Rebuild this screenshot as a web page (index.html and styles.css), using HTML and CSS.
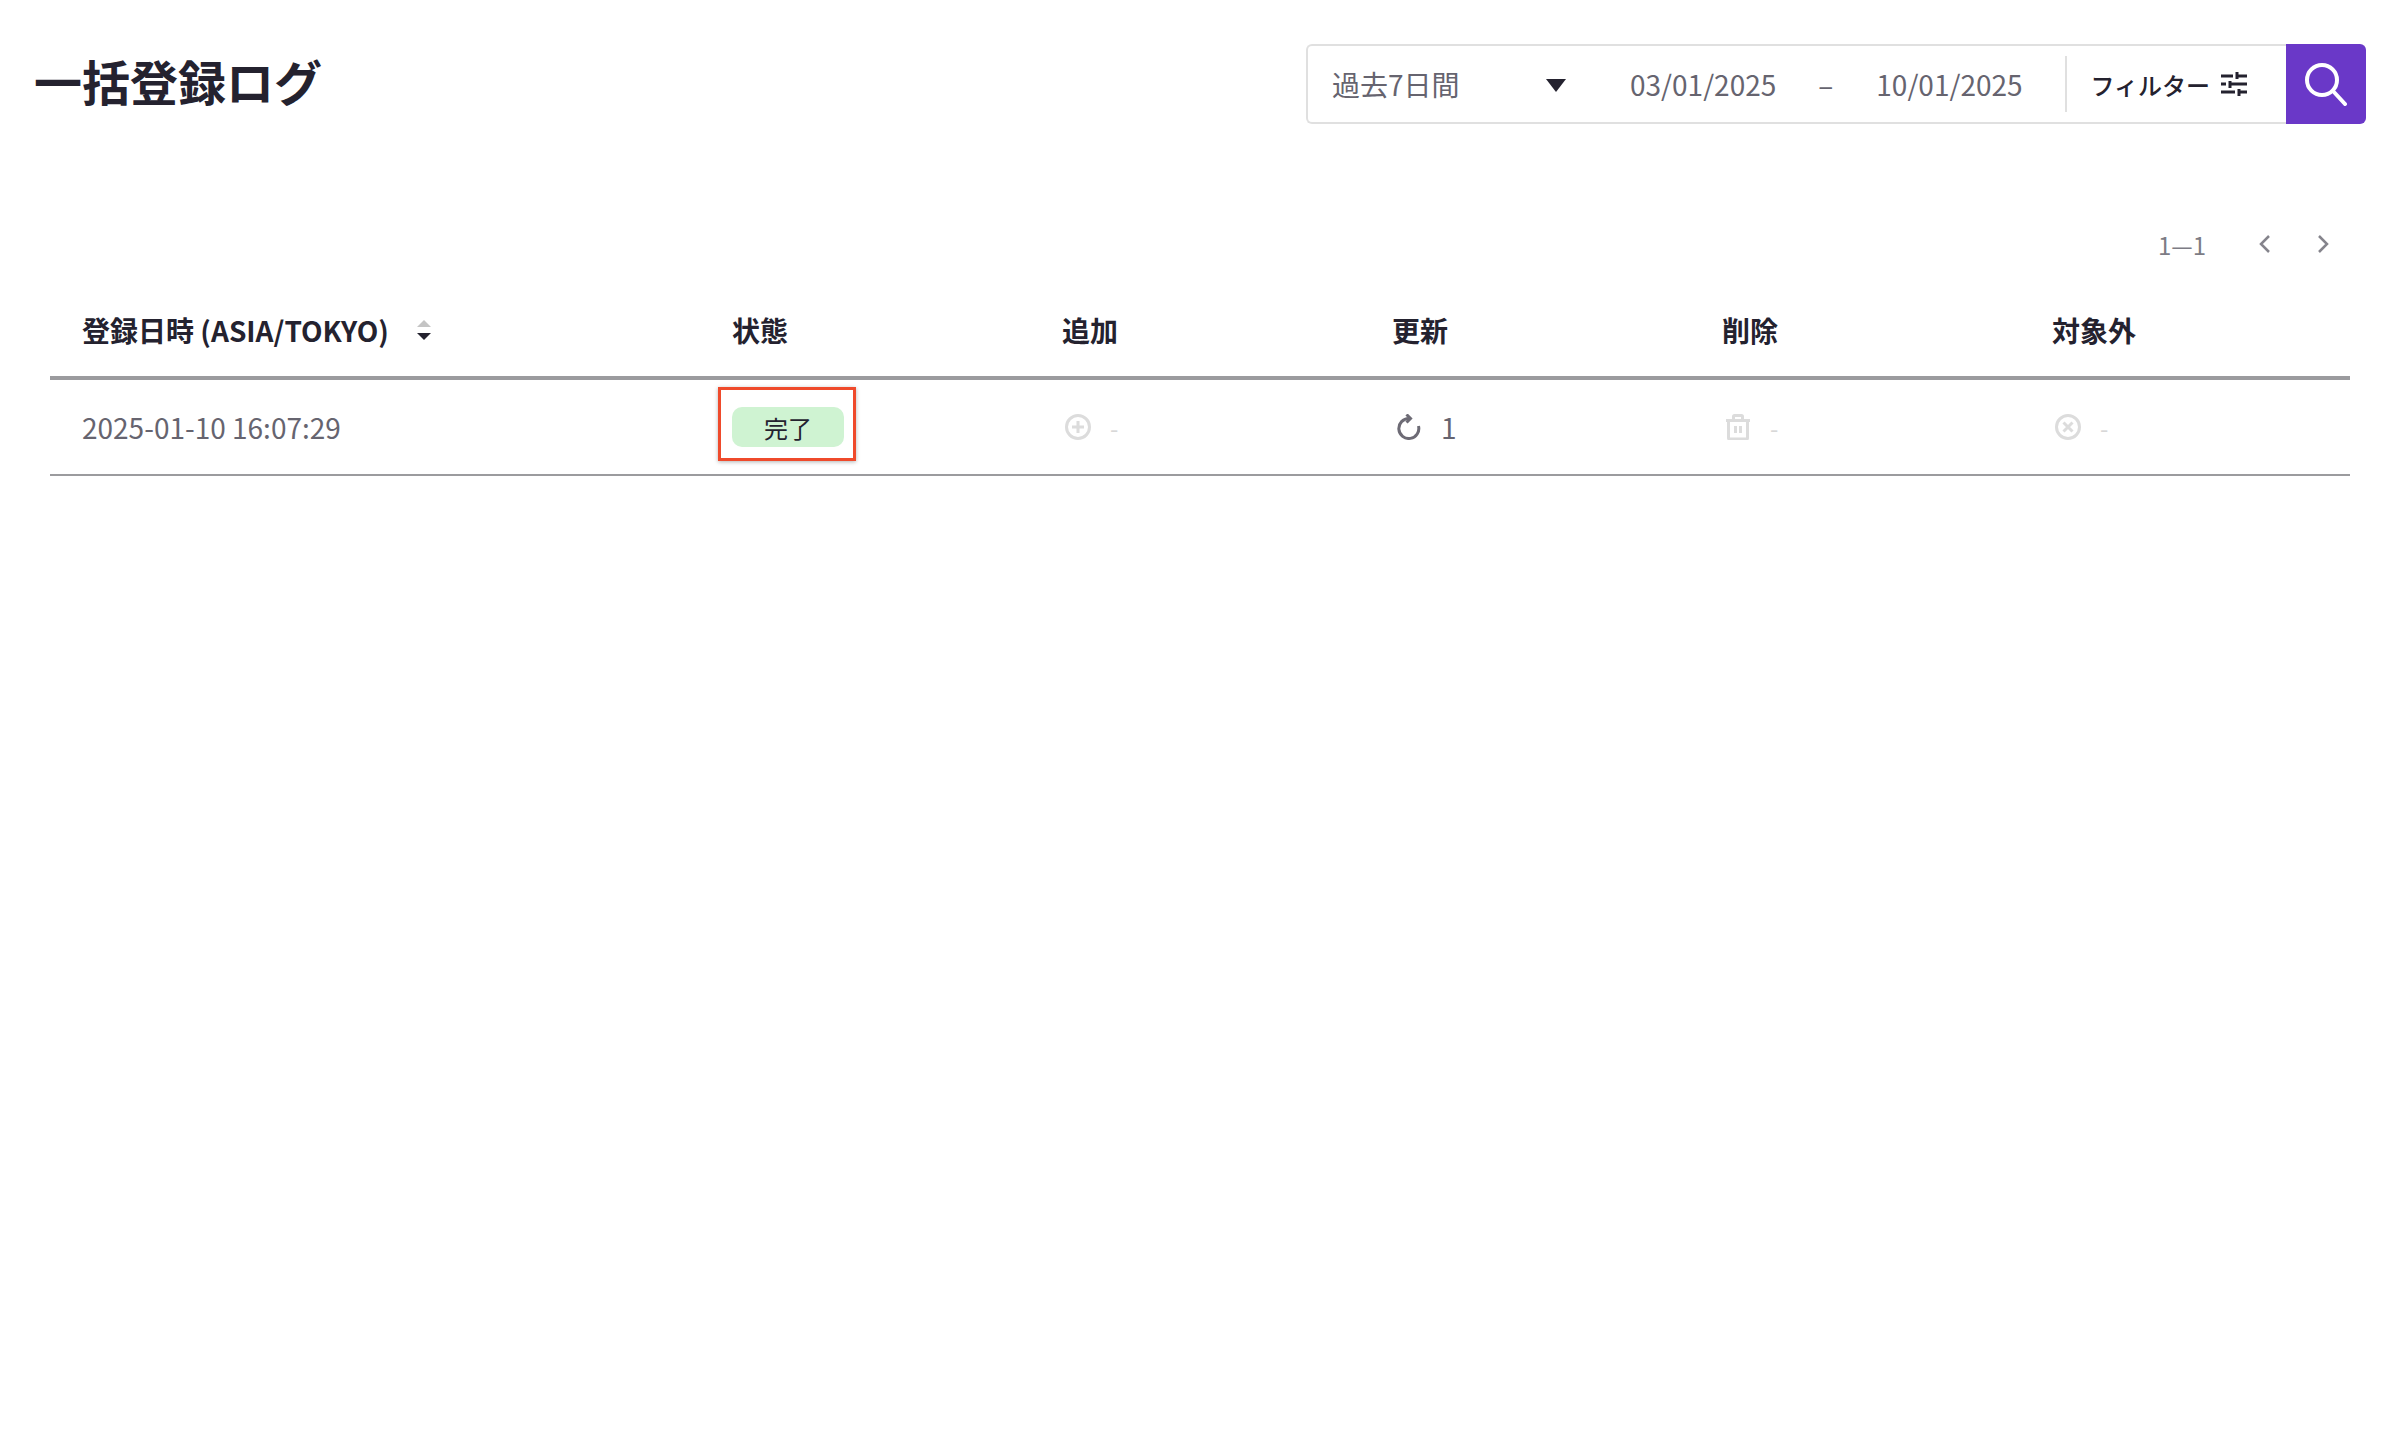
FILE: index.html
```html
<!DOCTYPE html>
<html lang="ja">
<head>
<meta charset="utf-8">
<title>一括登録ログ</title>
<link rel="stylesheet" href="styles.css">
</head>
<body>
<header class="top">
  <h1 class="title">一括登録ログ</h1>
  <div class="filters">
    <div class="range">
      <span class="range-label">過去7日間</span>
      <svg class="caret" viewBox="0 0 20 13"><path d="M0 0h20L10 13z"/></svg>
      <span class="date date-from">03/01/2025</span>
      <span class="date-sep">–</span>
      <span class="date date-to">10/01/2025</span>
      <span class="divider"></span>
      <span class="filter-btn">フィルター</span>
      <svg class="tune" viewBox="0 0 26 24"><path d="M0 4h12M16 4h10M16 0v7M0 12h5M9 12h17M9 9v7M0 20h14M18 20h8M18 17v7"/></svg>
    </div>
    <button class="search" type="button" aria-label="検索">
      <svg viewBox="0 0 44 44"><circle cx="18" cy="18" r="15"/><path d="M29 29l12 13"/></svg>
    </button>
  </div>
</header>
<nav class="pager">
  <span class="pager-count">1—1</span>
  <svg class="chev chev-prev" viewBox="0 0 12 20"><path d="M10 2L2 10l8 8"/></svg>
  <svg class="chev chev-next" viewBox="0 0 12 20"><path d="M2 2l8 8-8 8"/></svg>
</nav>
<section class="table">
  <div class="row head">
    <div class="cell first">登録日時 (ASIA/TOKYO)
      <svg class="sort" viewBox="0 0 14 20"><path class="sort-up" d="M7 0l7 7H0z"/><path class="sort-down" d="M0 13h14l-7 7z"/></svg>
    </div>
    <div class="cell">状態</div>
    <div class="cell">追加</div>
    <div class="cell">更新</div>
    <div class="cell">削除</div>
    <div class="cell">対象外</div>
  </div>
  <div class="row body">
    <div class="cell first">2025-01-10 16:07:29</div>
    <div class="cell status">
      <span class="badge">完了</span>
      <span class="highlight"></span>
    </div>
    <div class="cell stat muted">
      <svg class="ico" viewBox="0 0 26 26"><circle cx="13" cy="13" r="11.5"/><path d="M13 7v12M7 13h12"/></svg>
      <span>-</span>
    </div>
    <div class="cell stat">
      <svg class="ico ico-refresh" viewBox="0 0 26 26"><path d="M13 4.500A10 10 0 1 0 22.500 12"/><path d="M10.500 0.500L14.500 4.500L10.500 8.500"/></svg>
      <span>1</span>
    </div>
    <div class="cell stat muted">
      <svg class="ico" viewBox="0 0 26 26"><path d="M1 6.500h24M3.500 6.500V24a1 1 0 0 0 1 1h17a1 1 0 0 0 1-1V6.500M8.500 6.500V2.500a1 1 0 0 1 1-1h7a1 1 0 0 1 1 1v4M10.500 12v7M15.500 12v7"/></svg>
      <span>-</span>
    </div>
    <div class="cell stat muted">
      <svg class="ico" viewBox="0 0 26 26"><circle cx="13" cy="13" r="11.500"/><path d="M8.500 8.500l9 9M17.500 8.500l-9 9"/></svg>
      <span>-</span>
    </div>
  </div>
</section>
</body>
</html>
```
FILE: styles.css
```css
* { box-sizing: border-box; }
html, body { margin: 0; padding: 0; background: #fff; }
body {
  font-family: "Noto Sans CJK JP", "Noto Sans", sans-serif;
  color: #24222f;
  width: 2404px;
  height: 1434px;
  overflow: hidden;
}
.top {
  display: flex;
  justify-content: space-between;
  align-items: flex-start;
  padding: 44px 38px 0 34px;
}
.title {
  margin: 0;
  font-size: 48px;
  line-height: 72px;
  font-weight: 700;
  color: #24222f;
}
.filters { display: flex; height: 80px; }
.range {
  display: flex;
  align-items: center;
  width: 980px;
  border: 2px solid #e0e0e0;
  border-right: 0;
  border-radius: 6px 0 0 6px;
  padding-left: 24px;
  font-size: 28px;
  color: #66646f;
}
.range-label { width: 214px; }
.caret { width: 20px; height: 13px; fill: #24222f; margin-top: 2px; }
.date-from { margin-left: 64px; }
.date-sep { margin-left: 42px; }
.date-to { margin-left: 43px; }
.divider { width: 2px; height: 56px; background: #e0e0e0; margin-left: 42px; }
.filter-btn { margin-left: 24px; font-size: 24px; font-weight: 500; color: #24222f; }
.tune { width: 26px; height: 24px; margin-left: 11px; fill: none; stroke: #24222f; stroke-width: 3; }
.search {
  width: 80px;
  padding: 0;
  border: 0;
  background: #6a38c8;
  border-radius: 0 6px 6px 0;
  display: flex;
  align-items: center;
  justify-content: center;
}
.search svg { width: 44px; height: 44px; fill: none; stroke: #fff; stroke-width: 4; stroke-linecap: round; }
.pager {
  display: flex;
  align-items: center;
  justify-content: flex-end;
  height: 40px;
  margin-top: 100px;
  padding-right: 75px;
  font-size: 24px;
  color: #7d7c85;
}
.chev { width: 12px; height: 20px; fill: none; stroke: #85848c; stroke-width: 2.500; }
.chev-prev { margin-left: 53px; }
.chev-next { margin-left: 46px; }
.table { margin: 0 54px 0 50px; padding-top: 0; }
.row {
  display: grid;
  grid-template-columns: 650px repeat(5, 330px);
  align-items: center;
}
.head { height: 116px; padding-top: 20px; border-bottom: 4px solid #9b9b9e; font-size: 28px; font-weight: 700; }
.body { height: 96px; border-bottom: 2px solid #9b9b9e; font-size: 28px; color: #66646f; }
.cell { padding-left: 32px; display: flex; align-items: center; position: relative; }
.sort { width: 14px; height: 20px; margin-left: 28px; }
.sort-up { fill: #c4c4c4; }
.sort-down { fill: #24222f; }
.status { height: 100%; }
.badge {
  width: 112px;
  height: 40px;
  border-radius: 10px;
  background: #cff3d2;
  color: #24222f;
  font-size: 24px;
  line-height: 42px;
  text-align: center;
}
.highlight {
  position: absolute;
  left: 18px;
  top: 7px;
  width: 138px;
  height: 74px;
  border: 3px solid #ef4a2b;
  box-shadow: 0 1px 4px rgba(0, 0, 0, .3);
}
.stat { gap: 19px; }
.ico { width: 26px; height: 26px; fill: none; stroke: #6d6b75; stroke-width: 3; margin-left: 3px; }
.ico-refresh { margin-left: 4px; }
.muted { color: #d8d8d8; font-size: 24px; }
.muted .ico { stroke: #dcdcdc; }
```
